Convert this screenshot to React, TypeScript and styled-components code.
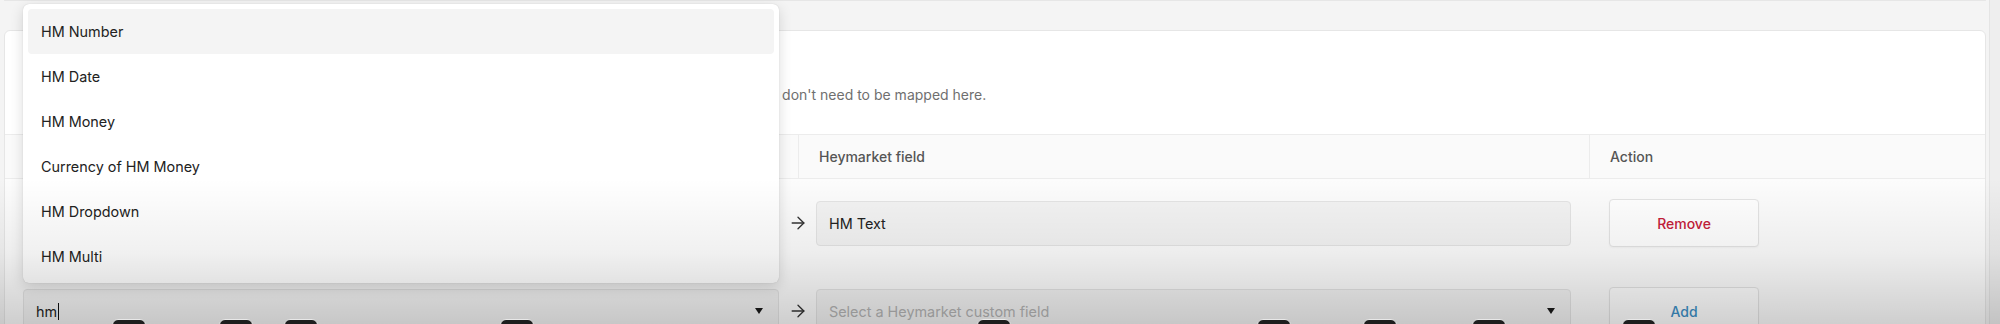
import React from 'react'
import styled, { createGlobalStyle } from 'styled-components'
import { ArrowRight } from 'lucide-react'

const GlobalStyle = createGlobalStyle`
	html, body {
		margin: 0;
		padding: 0;
	}
	body {
		background: #f4f4f4;
		font-family: Inter, 'Liberation Sans', sans-serif;
		color: #222;
	}
	#root {
		height: 324px;
		overflow: hidden;
	}
`

const Page = styled.div`
	position: relative;
	display: flex;
	height: 324px;
	overflow: hidden;
`

const Main = styled.div`
	flex: 1;
	display: flex;
	flex-direction: column;
	gap: 29px;
	padding: 0 3px 0 4px;
`

const ScrollStrip = styled.div`
	width: 10px;
	background: #eeeeee;
	border-left: 1px solid #e4e4e4;
`

const TopCard = styled.div`
	height: 3px;
	background: #fff;
	border: 1px solid #e6e6e6;
	border-top: none;
	border-radius: 0 0 6px 6px;
`

const Card = styled.div`
	background: #fff;
	border: 1px solid #e6e6e6;
	border-radius: 6px;
`

const CardHeader = styled.div`
	box-sizing: border-box;
	height: 103px;
	padding: 19px 24px 0;
`

const CardTitle = styled.div`
	font-size: 16px;
	font-weight: 600;
	line-height: 24px;
	color: #222;
`

const Description = styled.div`
	margin-top: 11px;
	font-size: 14px;
	line-height: 20px;
	color: #6f6f6f;
`

const TableHead = styled.div`
	box-sizing: border-box;
	display: grid;
	grid-template-columns: 793px 791px 1fr;
	height: 45px;
	background: #fafafa;
	border-top: 1px solid #ececec;
	border-bottom: 1px solid #ececec;
`

const HeadCell = styled.div`
	display: flex;
	align-items: center;
	padding-left: 20px;
	font-size: 14px;
	font-weight: 500;
	color: #555;
	& + & {
		border-left: 1px solid #ececec;
	}
`

const Row = styled.div`
	display: flex;
	align-items: center;
	padding: 20px 0 20px 18px;
	background: #fcfcfc;
`

const FieldWrap = styled.div<{ $width: number }>`
	position: relative;
	width: ${p => p.$width}px;
`

const FieldBox = styled.div<{ $placeholder?: boolean }>`
	box-sizing: border-box;
	display: flex;
	align-items: center;
	height: 45px;
	padding: 0 15px 0 12px;
	background: #f3f3f3;
	border: 1px solid #e4e4e4;
	border-radius: 4px;
	font-size: 14.4px;
	color: ${p => (p.$placeholder ? '#b4b4b4' : '#222')};
`

const TextCaret = styled.span`
	display: inline-block;
	width: 1px;
	height: 17px;
	margin-left: 1px;
	background: #111;
`

const Caret = styled.span`
	margin-left: auto;
	width: 0;
	height: 0;
	border-left: 4px solid transparent;
	border-right: 4px solid transparent;
	border-top: 6px solid #1a1a1a;
`

const ArrowCell = styled.div`
	width: 37px;
	display: flex;
	justify-content: center;
	color: #333;
`

const ActionButton = styled.button<{ $tone: string }>`
	box-sizing: border-box;
	width: 150px;
	height: 48px;
	margin-left: 38px;
	background: #fff;
	border: 1px solid #e4e4e4;
	border-radius: 4px;
	box-shadow: 0 1px 2px rgba(0, 0, 0, 0.04);
	font-family: Inter, 'Liberation Sans', sans-serif;
	font-size: 14px;
	font-weight: 500;
	color: ${p => p.$tone};
	cursor: pointer;
`

const Menu = styled.div`
	position: absolute;
	left: 0;
	right: 0;
	bottom: calc(100% + 6px);
	padding: 5px 5px 4px;
	background: #fff;
	border-radius: 6px;
	box-shadow: 0 4px 14px rgba(0, 0, 0, 0.14), 0 0 1px rgba(0, 0, 0, 0.2);
	z-index: 10;
`

const MenuItem = styled.div<{ $active?: boolean }>`
	display: flex;
	align-items: center;
	height: 45px;
	padding-left: 13px;
	border-radius: 4px;
	background: ${p => (p.$active ? '#f4f4f4' : 'transparent')};
	font-size: 14.4px;
	color: #222;
`

const Shade = styled.div`
	position: absolute;
	inset: 0;
	pointer-events: none;
	z-index: 20;
	background: linear-gradient(
		to bottom,
		rgba(0, 0, 0, 0) 0%,
		rgba(0, 0, 0, 0) 55%,
		rgba(0, 0, 0, 0.06) 78%,
		rgba(0, 0, 0, 0.18) 100%
	);
`

const Key = styled.div<{ $left: number }>`
	position: absolute;
	top: 319px;
	left: ${p => p.$left}px;
	width: 32px;
	height: 20px;
	background: #1e1e1e;
	border: 1px solid #e8e8e8;
	border-radius: 6px;
	z-index: 30;
`

const options = ['HM Number', 'HM Date', 'HM Money', 'Currency of HM Money', 'HM Dropdown', 'HM Multi']
const keys = [112, 219, 284, 500, 977, 1257, 1363, 1472, 1622]

export default function App() {
	return (
		<>
			<GlobalStyle />
			<Page>
				<Main>
					<TopCard />
					<Card>
						<CardHeader>
							<CardTitle>Custom field mapping</CardTitle>
							<Description>
								Map your Salesforce custom fields to Heymarket custom fields below. Standard fields like name, email and phone don't need to be mapped here.
							</Description>
						</CardHeader>
						<TableHead>
							<HeadCell>Salesforce field</HeadCell>
							<HeadCell>Heymarket field</HeadCell>
							<HeadCell>Action</HeadCell>
						</TableHead>
						<Row>
							<FieldWrap $width={756}>
								<FieldBox>
									Text Field
									<Caret />
								</FieldBox>
							</FieldWrap>
							<ArrowCell>
								<ArrowRight size={20} strokeWidth={1.6} />
							</ArrowCell>
							<FieldWrap $width={755}>
								<FieldBox>HM Text</FieldBox>
							</FieldWrap>
							<ActionButton $tone="#c5203a">Remove</ActionButton>
						</Row>
						<Row>
							<FieldWrap $width={756}>
								<Menu>
									{options.map((o, i) => (
										<MenuItem key={o} $active={i === 0}>
											{o}
										</MenuItem>
									))}
								</Menu>
								<FieldBox>
									hm
									<TextCaret />
									<Caret />
								</FieldBox>
							</FieldWrap>
							<ArrowCell>
								<ArrowRight size={20} strokeWidth={1.6} />
							</ArrowCell>
							<FieldWrap $width={755}>
								<FieldBox $placeholder>
									Select a Heymarket custom field
									<Caret />
								</FieldBox>
							</FieldWrap>
							<ActionButton $tone="#3d8fc6">Add</ActionButton>
						</Row>
					</Card>
				</Main>
				<ScrollStrip />
				<Shade />
				{keys.map(k => (
					<Key key={k} $left={k} />
				))}
			</Page>
		</>
	)
}
